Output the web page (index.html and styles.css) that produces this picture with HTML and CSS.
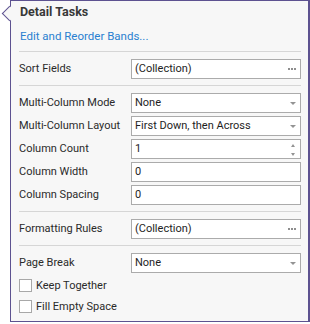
FILE: index.html
```html
<!DOCTYPE html>
<html>
<head>
<meta charset="utf-8">
<link rel="stylesheet" href="styles.css">
</head>
<body>
<div class="panel">
  <div class="beak"></div>
  <div class="head">
    <div class="title">Detail Tasks</div>
    <div class="link">Edit and Reorder Bands...</div>
  </div>
  <div class="sep"></div>
  <div class="section">
    <div class="row"><span class="label">Sort Fields</span><div class="field">(Collection)<span class="dots"><i></i><i></i><i></i></span></div></div>
  </div>
  <div class="sep"></div>
  <div class="section">
    <div class="row"><span class="label">Multi-Column Mode</span><div class="field">None<span class="drop"></span></div></div>
    <div class="row"><span class="label">Multi-Column Layout</span><div class="field">First Down, then Across<span class="drop"></span></div></div>
    <div class="row"><span class="label">Column Count</span><div class="field">1<span class="spin"><i class="up"></i><i class="down"></i></span></div></div>
    <div class="row"><span class="label">Column Width</span><div class="field">0</div></div>
    <div class="row"><span class="label">Column Spacing</span><div class="field">0</div></div>
  </div>
  <div class="sep"></div>
  <div class="section">
    <div class="row"><span class="label">Formatting Rules</span><div class="field">(Collection)<span class="dots"><i></i><i></i><i></i></span></div></div>
  </div>
  <div class="sep"></div>
  <div class="section last">
    <div class="row"><span class="label">Page Break</span><div class="field">None<span class="drop"></span></div></div>
    <div class="checks">
      <div class="check"><span class="box"></span>Keep Together</div>
      <div class="check"><span class="box"></span>Fill Empty Space</div>
    </div>
  </div>
</div>
</body>
</html>
```
FILE: styles.css
```css
html, body {
  margin: 0;
  padding: 0;
  background: #ffffff;
}
body {
  font-family: Roboto, "Noto Sans", sans-serif;
  font-size: 11px;
  color: #2a2a2a;
}
.panel {
  position: relative;
  margin-left: 10px;
  height: 320px;
  border: 1px solid #5d5290;
  border-right-width: 2px;
  background: #f7f7f7;
  padding: 0 7px 0 8px;
  box-sizing: content-box;
  width: 282px;
}
.beak {
  position: absolute;
  left: -7px;
  top: 7px;
  width: 10px;
  height: 10px;
  background: #f7f7f7;
  border-left: 1px solid #5d5290;
  border-bottom: 1px solid #5d5290;
  transform: rotate(45deg);
  transform-origin: center;
}
.head {
  box-sizing: border-box;
  padding: 2px 0 0 1px;
  height: 50px;
}
.title {
  font-weight: bold;
  font-size: 12.5px;
  line-height: 18px;
  color: #383838;
}
.link {
  margin-top: 7px;
  line-height: 16px;
  font-size: 11.5px;
  color: #2a7fd0;
}
.sep {
  height: 1px;
  background: #d6d6d6;
}
.section {
  display: flex;
  flex-direction: column;
  gap: 3px;
  padding: 7px 0 6px;
}
.section.last {
  gap: 0;
}
.row {
  display: grid;
  grid-template-columns: 112px 170px;
  align-items: center;
  height: 20px;
}
.label {
  line-height: 20px;
}
.field {
  position: relative;
  box-sizing: border-box;
  height: 20px;
  border: 1px solid #ababab;
  background: #ffffff;
  line-height: 18px;
  padding-left: 3px;
  color: #1e1e1e;
}
.dots {
  position: absolute;
  right: 4px;
  top: 8px;
  display: flex;
  gap: 1px;
}
.dots i {
  width: 2px;
  height: 2px;
  background: #8e8e8e;
}
.drop {
  position: absolute;
  right: 4px;
  top: 8px;
  width: 0;
  height: 0;
  border-left: 3px solid transparent;
  border-right: 3px solid transparent;
  border-top: 3px solid #939393;
}
.spin {
  position: absolute;
  right: 5px;
  top: 4px;
  display: flex;
  flex-direction: column;
  gap: 6px;
}
.spin i {
  width: 0;
  height: 0;
  border-left: 2.5px solid transparent;
  border-right: 2.5px solid transparent;
}
.spin .up {
  border-bottom: 3px solid #939393;
}
.spin .down {
  border-top: 3px solid #939393;
}
.checks {
  display: flex;
  flex-direction: column;
  gap: 8px;
  padding-top: 6px;
}
.check {
  display: flex;
  align-items: center;
  gap: 4px;
  height: 13px;
  line-height: 13px;
}
.box {
  width: 11px;
  height: 11px;
  border: 1px solid #a8a8a8;
  background: #ffffff;
}
```
